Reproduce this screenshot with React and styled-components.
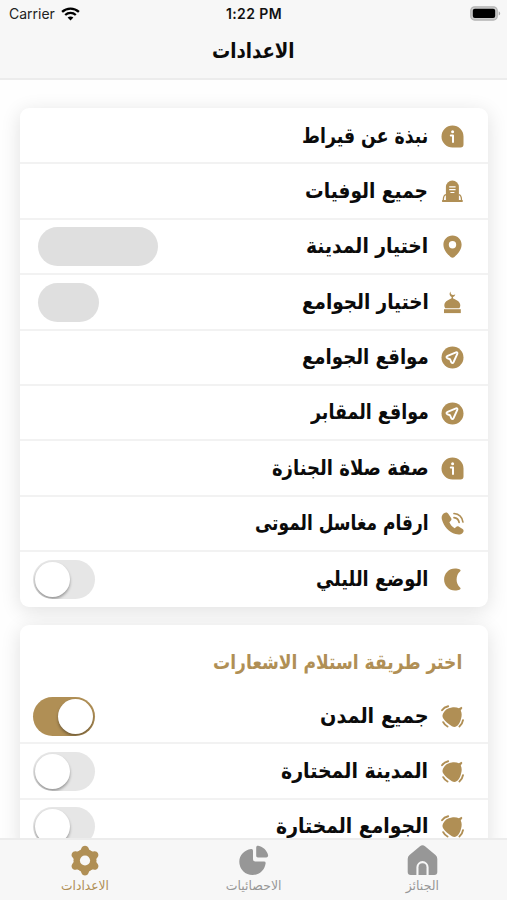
import React, { useLayoutEffect, useRef, useState } from 'react'
import styled, { createGlobalStyle } from 'styled-components'

const GOLD = '#b08f55'

const GlobalStyle = createGlobalStyle`
    * {
        box-sizing: border-box;
    }

    body {
        margin: 0;
        background: #fff;
        font-family: "DejaVu Sans", sans-serif;
    }
`

const Screen = styled.div`
    display: flex;
    flex-direction: column;
    width: 507px;
    height: 900px;
    overflow: hidden;
    background: #fefefe;
`

const Header = styled.header`
    flex: none;
    height: 80px;
    background: #f7f7f7;
    border-bottom: 2px solid #ececec;
`

const StatusBar = styled.div`
    display: grid;
    grid-template-columns: 1fr auto 1fr;
    align-items: center;
    height: 27px;
    padding: 0 6px 0 9px;
    font-family: Inter, sans-serif;
    font-size: 14px;
    color: #222;
`

const Carrier = styled.div`
    display: flex;
    align-items: center;
    gap: 6px;
`

const Clock = styled.div`
    margin-right: 2px;
    font-weight: 600;
    letter-spacing: 0.4px;
    color: #111;
`

const Battery = styled.div`
    display: flex;
    justify-content: flex-end;
`

const TitleRow = styled.div`
    display: flex;
    justify-content: center;
    align-items: center;
    height: 50px;
`

const Content = styled.main`
    flex: 1;
    min-height: 0;
    display: flex;
    flex-direction: column;
    gap: 18px;
    padding: 28px 19px 0 20px;
    overflow: hidden;
`

const Card = styled.section`
    flex: none;
    padding-top: 1px;
    border-radius: 9px;
    background: #fff;
    box-shadow: 0 4px 20px rgba(0, 0, 0, 0.12);
`

const Row = styled.div`
    display: flex;
    flex-direction: row-reverse;
    align-items: center;
    height: ${({ $last }) => ($last ? '54.4px' : '55.4px')};
    padding: ${({ $last }) => ($last ? '0' : '1px')} 24.5px 0 13px;
    border-bottom: ${({ $last }) => ($last ? 'none' : '2px solid #f2f2f2')};

    & > svg {
        flex: none;
        margin-left: 12px;
    }
`

const Spacer = styled.div`
    flex: 1;
`

const SectionHead = styled.div`
    display: flex;
    justify-content: flex-end;
    align-items: center;
    height: 63.5px;
    padding: 10px 25.5px 0 0;
`

const TextBox = styled.div`
    display: flex;
    justify-content: flex-start;
    flex: none;
    direction: rtl;
`

const Text = styled.span`
    flex: none;
    font-size: ${({ $size }) => $size}px;
    font-weight: ${({ $bold }) => ($bold ? 700 : 400)};
    line-height: 1.4;
    color: ${({ $color }) => $color || '#0b0b0b'};
    white-space: nowrap;
    transform-origin: right center;
`

const Placeholder = styled.div`
    width: ${({ $width }) => $width}px;
    height: 39px;
    margin-left: 4.5px;
    border-radius: 20px;
    background: #dfdfdf;
`

const Track = styled.div`
    display: flex;
    justify-content: ${({ $on }) => ($on ? 'flex-end' : 'flex-start')};
    align-items: center;
    width: 62px;
    height: 39px;
    padding: 0 2px;
    border-radius: 20px;
    background: ${({ $on }) => ($on ? GOLD : '#e6e6e6')};
    overflow: hidden;
`

const Knob = styled.div`
    width: 35px;
    height: 35px;
    border-radius: 50%;
    background: #fff;
    box-shadow: 0 2px 3px rgba(0, 0, 0, 0.35);
`

const TabBar = styled.nav`
    flex: none;
    display: grid;
    grid-template-columns: repeat(3, 1fr);
    height: 62px;
    background: #f7f7f7;
    border-top: 2px solid #ececec;
`

const Tab = styled.div`
    display: flex;
    flex-direction: column;
    align-items: center;
    padding-top: 5px;
    gap: 1px;
`

// keeps the label at a set width, whatever font is picked
function FitText({ width, size, bold, color, children }) {
    const ref = useRef(null)
    const [scale, setScale] = useState(1)

    useLayoutEffect(() => {
        setScale(width / ref.current.offsetWidth)
    }, [width])

    return (
        <TextBox style={{ width }}>
            <Text
                ref={ref}
                $size={size}
                $bold={bold}
                $color={color}
                style={{ transform: `scaleX(${scale})` }}
            >
                {children}
            </Text>
        </TextBox>
    )
}

function InfoIcon() {
    return (
        <svg width="23" height="23" viewBox="0 0 23 23">
            <path fill={GOLD} d="M11.5.5a11 11 0 0 0 0 22h8a3 3 0 0 0 3-3v-8a11 11 0 0 0-11-11z" />
            <circle cx="11.6" cy="6.7" r="1.5" fill="#fff" />
            <path d="M9.8 10.6h2.200v6.400" fill="none" stroke="#fff" strokeWidth="2" strokeLinecap="round" strokeLinejoin="round" />
        </svg>
    )
}

function GraveIcon() {
    return (
        <svg width="23" height="23" viewBox="0 0 23 23" fill={GOLD}>
            <path d="M4.900 21.500V7a6.500 6.500 0 0 1 13 0v14.500z" />
            <path d="M1.100 20h20.600v2H1.100z" />
            <path d="M5 14.600c-2 .2-2.600 1.800-2.700 5.600M17.800 14.600c2 .2 2.600 1.800 2.700 5.600" fill="none" stroke={GOLD} strokeWidth="1.300" />
            <path d="M8.200 6.800h6.400M8.200 9.700h6.400M9.400 12.500h4" stroke="#fff" strokeWidth="1.200" fill="none" />
        </svg>
    )
}

function PinIcon() {
    return (
        <svg width="23" height="23" viewBox="0 0 23 23">
            <path fill={GOLD} fillRule="evenodd" d="M11.500.4c-5.100 0-9.100 4-9.100 9 0 5.200 4 9.900 7.200 12.500a3 3 0 0 0 3.800 0c3.200-2.600 7.200-7.300 7.200-12.500 0-5-4-9-9.100-9zm0 5.600a3.700 3.700 0 1 1 0 7.400 3.700 3.700 0 0 1 0-7.400z" />
        </svg>
    )
}

function MosqueIcon() {
    return (
        <svg width="23" height="23" viewBox="0 0 23 23" fill={GOLD}>
            <path d="M9.600.6c-.3 2.700 1.400 4.200 4.700 3-.5 1.500-1.400 2.200-2.300 2.500v2h-1.400v-2C8.500 5.300 7.900 2.300 9.600.6z" />
            <path d="M11.300 6.800c2.200 1.700 8 3 8 7.400 0 1.200-.4 2.200-1 3h-14c-.6-.8-1-1.800-1-3 0-4.400 5.800-5.700 8-7.400z" />
            <path d="M3 18.200h16.800v3.900H3z" />
        </svg>
    )
}

function NavIcon() {
    return (
        <svg width="23" height="23" viewBox="0 0 23 23">
            <circle cx="11.500" cy="11.500" r="11" fill={GOLD} />
            <path d="M15 6.400L6.600 9.800c-1.500.7-1.500 1.900 0 2.500l1.800.7c.5.200.8.500 1 1l.7 1.800c.6 1.500 1.800 1.600 2.500.2l3.700-8.100c.5-1.200-.2-1.900-1.300-1.500z" fill="none" stroke="#fff" strokeWidth="1.900" strokeLinejoin="round" />
        </svg>
    )
}

function PhoneIcon() {
    return (
        <svg width="23" height="23" viewBox="0 0 23 23">
            <path fill={GOLD} d="M3 1.300C1 2.600.2 5 .9 7.500c1.900 7 7.100 12.700 13.600 14.600 3.300 1 6.200.6 7.800-2.100.6-1.100.3-2.200-.7-2.900l-3.600-2.400c-1-.7-2.100-.6-2.900.2l-1.400 1.400c-2.600-1.600-4.200-3.400-5.300-6l1.400-1.500c.8-.8.9-1.800.3-2.800L7.600 2.200C6.500.3 4.700.2 3 1.300z" />
            <path d="M13 1.500c4.800.4 8.200 3.700 8.900 8.500M13 5.600c2.700.3 4.600 2 5.100 4.700" fill="none" stroke={GOLD} strokeWidth="1.700" strokeLinecap="round" />
        </svg>
    )
}

function MoonIcon() {
    return (
        <svg width="23" height="23" viewBox="0 0 23 23">
            <path fill={GOLD} d="M14 .5C7.900.5 3.100 5.300 3.100 11.500S7.900 22.500 14 22.500c1.800 0 3.400-.3 4.900-1.100.9-.5.900-1.400.1-2-4.500-3.700-4.500-12.100 0-15.800.8-.6.800-1.500-.1-2C17.400.8 15.800.5 14 .5z" />
        </svg>
    )
}

function BellIcon() {
    return (
        <svg width="23" height="23" viewBox="0 0 23 23">
            <path fill={GOLD} d="M10.800 2.500c2.700-.4 5.200-.1 7.100.8l2.600-1.500.9 1.200-1.700 2.600c1.300 2.600 1.200 5.300.4 7.900-.5 2.500-1.400 4.600-3 6.600-1.500 1.900-3.900 2.400-6.200 1.100-3.400-1.900-6.600-4.700-8.600-7.700-1.400-2.100-.8-3.700.1-5.400 1.600-3.300 4.100-5 8.400-5.600z" />
            <path d="M1 5.200C2.500 3 4.500 1.800 7.200 1.200M2.200 17.200c.9 1.900 2.300 3.300 4.300 4.300M22 15.200c-.4 2.600-1.600 4.700-3.600 6.200" fill="none" stroke={GOLD} strokeWidth="1.900" strokeLinecap="round" />
        </svg>
    )
}

function GearIcon() {
    return (
        <svg width="30" height="31" viewBox="0 0 30 31">
            <g fill={GOLD}>
                <circle cx="15" cy="15.500" r="11.300" />
                {[0, 60, 120, 180, 240, 300].map((angle) => (
                    <path key={angle} transform={`rotate(${angle} 15 15.500)`} d="M8.900 6c1.800-.5 2.100-1.700 2.700-3.200 1.200-2.900 5.600-2.900 6.800 0 .6 1.500.9 2.700 2.700 3.200z" />
                ))}
            </g>
            <circle cx="15" cy="15.500" r="5.100" fill="#f7f7f7" />
        </svg>
    )
}

function PieIcon() {
    return (
        <svg width="31" height="31" viewBox="0 0 31 31" fill="#979797">
            <path d="M13 4a1.700 1.700 0 0 1 2 1.700V14a2.500 2.500 0 0 0 2.500 2.500h8.400a1.700 1.700 0 0 1 1.700 2C26.500 25.300 21.600 30 14.600 30A13.200 13.200 0 0 1 1.300 16.800C1.300 10 6.500 4.900 13 4z" />
            <path d="M18.200 2.500c0-1.200.9-1.900 2-1.700 4.900.9 8.900 4.900 9.900 9.500.2 1.200-.6 2.100-1.900 2.100h-8.300c-1 0-1.700-.7-1.700-1.700z" />
        </svg>
    )
}

function HomeIcon() {
    return (
        <svg width="31" height="31" viewBox="0 0 31 31" fill="#979797">
            <path d="M13 1.300c1.600-1.300 3.400-1.300 5 0l10.500 8.800A5 5 0 0 1 30.300 14v13a3 3 0 0 1-3 3h-5.700v-7.800a6.100 6.100 0 0 0-12.200 0V30H3.700a3 3 0 0 1-3-3V14a5 5 0 0 1 1.800-3.900z" />
            <path d="M11.500 30v-7.800a4 4 0 0 1 8 0V30z" />
        </svg>
    )
}

function WifiIcon() {
    return (
        <svg width="19" height="14" viewBox="0 0 19 14" fill="none" stroke="#000" strokeWidth="2.300">
            <path d="M1.100 4.900c4.700-4.500 12.100-4.500 16.800 0M4.200 8c3-2.800 7.600-2.800 10.600 0" />
            <path d="M9.500 13.500L6.600 10.600c1.700-1.500 4.100-1.500 5.800 0z" fill="#000" stroke="none" />
        </svg>
    )
}

function BatteryIcon() {
    return (
        <svg width="31" height="15" viewBox="0 0 31 15">
            <rect x=".8" y=".8" width="26.400" height="13.200" rx="3.800" fill="#ccc" stroke="#b4b4b4" strokeWidth="1.300" />
            <rect x="2.800" y="2.800" width="22.400" height="9.200" rx="2" fill="#000" />
            <path d="M28.700 5.200c2 .8 2 3.600 0 4.400z" fill="#aaa" />
        </svg>
    )
}

function Toggle({ on }) {
    return (
        <Track $on={on}>
            <Knob />
        </Track>
    )
}

const mainRows = [
    { label: 'نبذة عن قيراط', width: 126, Icon: InfoIcon },
    { label: 'جميع الوفيات', width: 123, Icon: GraveIcon },
    { label: 'اختيار المدينة', width: 122, Icon: PinIcon, pill: 120 },
    { label: 'اختيار الجوامع', width: 127, Icon: MosqueIcon, pill: 61 },
    { label: 'مواقع الجوامع', width: 127, Icon: NavIcon },
    { label: 'مواقع المقابر', width: 118, Icon: NavIcon },
    { label: 'صفة صلاة الجنازة', width: 157, Icon: InfoIcon },
    { label: 'ارقام مغاسل الموتى', width: 174, Icon: PhoneIcon },
    { label: 'الوضع الليلي', width: 112, Icon: MoonIcon, toggle: true },
]

const alertRows = [
    { label: 'جميع المدن', width: 109, Icon: BellIcon, toggle: true, on: true },
    { label: 'المدينة المختارة', width: 147, Icon: BellIcon, toggle: true },
    { label: 'الجوامع المختارة', width: 152, Icon: BellIcon, toggle: true },
]

function SettingsRow({ row, last }) {
    const { label, width, Icon, pill, toggle, on } = row
    return (
        <Row $last={last}>
            <Icon />
            <FitText width={width} size={21} bold>{label}</FitText>
            <Spacer />
            {pill && <Placeholder $width={pill} />}
            {toggle && <Toggle on={on} />}
        </Row>
    )
}

export default function App() {
    return (
        <Screen>
            <GlobalStyle />
            <Header>
                <StatusBar>
                    <Carrier>Carrier <WifiIcon /></Carrier>
                    <Clock>1:22 PM</Clock>
                    <Battery><BatteryIcon /></Battery>
                </StatusBar>
                <TitleRow>
                    <FitText width={83} size={21} bold>الاعدادات</FitText>
                </TitleRow>
            </Header>
            <Content>
                <Card>
                    {mainRows.map((row, i) => (
                        <SettingsRow key={row.label} row={row} last={i === mainRows.length - 1} />
                    ))}
                </Card>
                <Card>
                    <SectionHead>
                        <FitText width={249} size={20} bold color={GOLD}>اختر طريقة استلام الاشعارات</FitText>
                    </SectionHead>
                    {alertRows.map((row, i) => (
                        <SettingsRow key={row.label} row={row} last={i === alertRows.length - 1} />
                    ))}
                </Card>
            </Content>
            <TabBar>
                <Tab>
                    <GearIcon />
                    <FitText width={48} size={12.5} color={GOLD}>الاعدادات</FitText>
                </Tab>
                <Tab>
                    <PieIcon />
                    <FitText width={56} size={12.5} color="#979797">الاحصائيات</FitText>
                </Tab>
                <Tab>
                    <HomeIcon />
                    <FitText width={33} size={12.5} color="#979797">الجنائز</FitText>
                </Tab>
            </TabBar>
        </Screen>
    )
}
